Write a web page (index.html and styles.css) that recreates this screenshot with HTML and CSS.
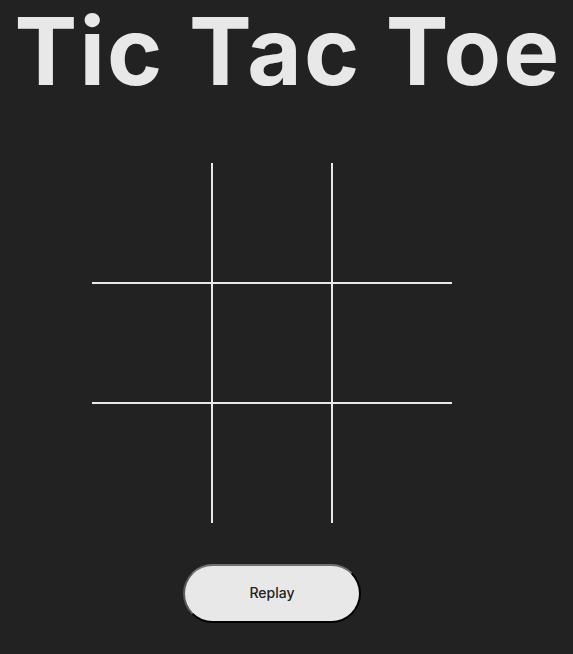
FILE: index.html
```html
<!DOCTYPE html>
<html lang="en">
<head>
<meta charset="utf-8">
<title>Tic Tac Toe</title>
<link rel="stylesheet" href="styles.css">
</head>
<body>
<h1 class="title">Tic Tac Toe</h1>
<main class="game">
  <div class="board">
    <div class="cell"></div>
    <div class="cell"></div>
    <div class="cell"></div>
    <div class="cell"></div>
    <div class="cell"></div>
    <div class="cell"></div>
    <div class="cell"></div>
    <div class="cell"></div>
    <div class="cell"></div>
  </div>
  <button class="replay" type="button">Replay</button>
</main>
</body>
</html>
```
FILE: styles.css
```css
html, body {
  margin: 0;
  padding: 0;
  background: #222222;
}
body {
  font-family: "Inter", "Open Sans", sans-serif;
  color: #e8e8e8;
  overflow: hidden;
}
.title {
  margin: 0;
  padding-left: 3px;
  font-size: 94px;
  font-weight: 700;
  line-height: 102px;
  height: 100px;
  text-align: center;
  letter-spacing: 2.2px;
  white-space: nowrap;
  color: #e8e8e8;
}
.game {
  display: flex;
  flex-direction: column;
  align-items: center;
  padding-right: 29px;
  padding-top: 63px;
}
.board {
  display: grid;
  grid-template-columns: repeat(3, 120px);
  grid-template-rows: repeat(3, 120px);
}
.cell {
  box-sizing: border-box;
  border: 0 solid #e8e8e8;
}
.cell:nth-child(3n+1) { border-right-width: 1px; }
.cell:nth-child(3n+2) { border-left-width: 1px; border-right-width: 1px; }
.cell:nth-child(3n) { border-left-width: 1px; }
.cell:nth-child(-n+3) { border-bottom-width: 1px; }
.cell:nth-child(n+4):nth-child(-n+6) { border-top-width: 1px; border-bottom-width: 1px; }
.cell:nth-child(n+7) { border-top-width: 1px; }
.replay {
  margin-top: 41px;
  box-sizing: border-box;
  width: 178px;
  height: 59px;
  padding: 0 0 3px;
  border-radius: 30px;
  border-width: 2px;
  border-style: solid;
  border-color: #707070 #000 #000 #5a5a5a;
  background: #e8e8e8;
  color: #222;
  font-family: "Inter", "Open Sans", sans-serif;
  font-size: 14px;
  font-weight: 500;
  cursor: pointer;
}
```
